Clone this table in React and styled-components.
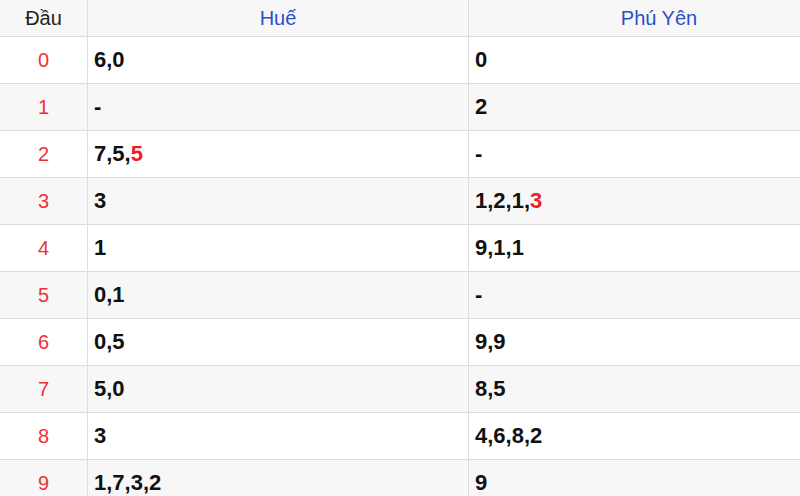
import React from "react";
import styled, { createGlobalStyle } from "styled-components";

const Global = createGlobalStyle`
  html, body { margin: 0; padding: 0; background: #fff; overflow: hidden; }
  body { font-family: "Liberation Sans", Arial, sans-serif; }
`;

const Table = styled.div`
  display: grid;
  grid-template-columns: 88px 381px 381px;
  width: 850px;
`;

const HeadCell = styled.div`
  height: 36px;
  display: flex;
  align-items: center;
  justify-content: center;
  background: #f7f7f7;
  border-bottom: 1px solid #dedede;
  border-right: 1px solid #dedede;
  font-size: 20px;
  color: ${(p) => (p.$blue ? "#2c4fc6" : "#222")};
`;

const IdxCell = styled.div`
  height: 46px;
  display: flex;
  align-items: center;
  justify-content: center;
  background: ${(p) => (p.$alt ? "#f7f7f7" : "#fff")};
  border-bottom: 1px solid #dedede;
  border-right: 1px solid #dedede;
  font-size: 20px;
  color: #ee3038;
`;

const ValCell = styled.div`
  height: 46px;
  display: flex;
  align-items: center;
  padding-left: 6px;
  background: ${(p) => (p.$alt ? "#f7f7f7" : "#fff")};
  border-bottom: 1px solid #dedede;
  border-right: 1px solid #dedede;
  font-size: 22px;
  font-weight: bold;
  color: #111;
`;

const Hot = styled.span`
  color: #ee1c25;
`;

const rows = [
  ["6,0", "0"],
  ["-", "2"],
  [["7,5,", "5"], "-"],
  ["3", ["1,2,1,", "3"]],
  ["1", "9,1,1"],
  ["0,1", "-"],
  ["0,5", "9,9"],
  ["5,0", "8,5"],
  ["3", "4,6,8,2"],
  ["1,7,3,2", "9"],
];

const renderVal = (v) =>
  Array.isArray(v) ? (
    <>
      {v[0]}
      <Hot>{v[1]}</Hot>
    </>
  ) : (
    v
  );

export default function App() {
  return (
    <>
      <Global />
      <Table>
        <HeadCell>Đầu</HeadCell>
        <HeadCell $blue>Huế</HeadCell>
        <HeadCell $blue>Phú Yên</HeadCell>
        {rows.map((r, i) => (
          <React.Fragment key={i}>
            <IdxCell $alt={i % 2 === 1}>{i}</IdxCell>
            <ValCell $alt={i % 2 === 1}>{renderVal(r[0])}</ValCell>
            <ValCell $alt={i % 2 === 1}>{renderVal(r[1])}</ValCell>
          </React.Fragment>
        ))}
      </Table>
    </>
  );
}
